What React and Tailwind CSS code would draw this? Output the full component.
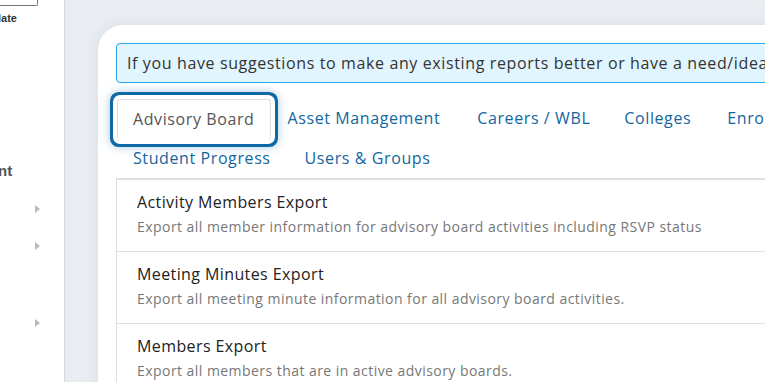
import React from "react";

const tabsRow1 = ["Advisory Board", "Asset Management", "Careers / WBL", "Colleges", "Enrollment"];
const tabsRow2 = ["Student Progress", "Users & Groups"];
const tabPad = ["", "pl-[14px] pr-[19px]", "pl-[16px] pr-[16px]", "pl-[16px] pr-[18px]", "pl-[16px] pr-[16px]"];

const items = [
  { t: "Activity Members Export", d: "Export all member information for advisory board activities including RSVP status" },
  { t: "Meeting Minutes Export", d: "Export all meeting minute information for all advisory board activities." },
  { t: "Members Export", d: "Export all members that are in active advisory boards." },
];

function Tri() {
  return <span className="block w-0 h-0 border-y-[4px] border-y-transparent border-l-[5px] border-l-[#b4bcc6]" />;
}

export default function App() {
  return (
    <div className="flex w-[765px] h-[382px] overflow-hidden bg-[#e9edf2]" style={{ fontFamily: '"Open Sans", sans-serif' }}>
      {/* sidebar */}
      <div className="relative w-[65px] shrink-0 bg-white border-r border-[#cfd7e2] flex flex-col">
        <div className="h-[6px] w-[38px] border-r border-b border-[#777] rounded-br-[2px]" />
        <div className="mt-[5px] text-[11px] font-semibold text-[#333] leading-[14px] -ml-[2px]" style={{ fontFamily: '"Liberation Sans", sans-serif' }}>late</div>
        <div className="mt-[138px] text-[15px] font-bold text-[#555] leading-[16px] -ml-[2px]" style={{ fontFamily: '"Liberation Sans", sans-serif' }}>nt</div>
        <div className="flex flex-col items-end pr-[24px]">
          <div className="mt-[26px]"><Tri /></div>
          <div className="mt-[29px]"><Tri /></div>
          <div className="mt-[69px]"><Tri /></div>
        </div>
      </div>

      {/* main */}
      <div className="flex-1 pt-[24px] pl-[32px]">
        <div className="h-[400px] w-[720px] bg-white rounded-tl-[26px] border-t border-l border-[#e1e5ea] shadow-[0_0_12px_rgba(150,165,185,0.18)] pt-[18px] pl-[18px]">
          <div className="h-[40px] w-[700px] flex items-center bg-[#e1f5fe] border border-[#2aa9ea] rounded-l-[4px] pl-[10px] text-[16px] tracking-[0.62px] text-[#333] whitespace-nowrap">
            If you have suggestions to make any existing reports better or have a need/idea for a new report, please let us know.
          </div>

          <div className="mt-[15px] w-[700px]">
            <div className="flex gap-[2px] h-[40px] pl-[1px]">
              {tabsRow1.map((t, i) =>
                i === 0 ? (
                  <div key={t} className="h-[41px] mt-[1px] pl-[15px] pr-[16px] pb-[2px] flex items-center bg-white border border-b-0 border-[#dedede] rounded-[3px] text-[16px] tracking-[0.6px] text-[#555] whitespace-nowrap shadow-[0_0_0_4px_#fff,0_0_0_7px_#0d6aa6,0_0_10px_7px_rgba(13,106,166,0.35)] relative z-10">
                    {t}
                  </div>
                ) : (
                  <div key={t} className={`h-[40px] ${tabPad[i]} flex items-center text-[16px] tracking-[0.6px] text-[#13669e] whitespace-nowrap`}>
                    {t}
                  </div>
                )
              )}
            </div>
            <div className="flex gap-[2px] h-[40px] pl-[1px]">
              {tabsRow2.map((t) => (
                <div key={t} className="h-[40px] px-[16px] flex items-center text-[16px] tracking-[0.6px] text-[#13669e] whitespace-nowrap">
                  {t}
                </div>
              ))}
            </div>
            <div className="border-t-2 border-[#dcdfe3]">
              <div className="border-l border-[#dedede]">
                {items.map((it) => (
                  <div key={it.t} className="pl-[20px] pt-[11px] pb-[14px] border-b border-[#e0e0e0]">
                    <div className="text-[16px] tracking-[0.4px] leading-[22px] text-[#222]">{it.t}</div>
                    <div className="mt-[4px] text-[14px] tracking-[0.45px] leading-[20px] text-[#777]">{it.d}</div>
                  </div>
                ))}
              </div>
            </div>
          </div>
        </div>
      </div>
    </div>
  );
}
